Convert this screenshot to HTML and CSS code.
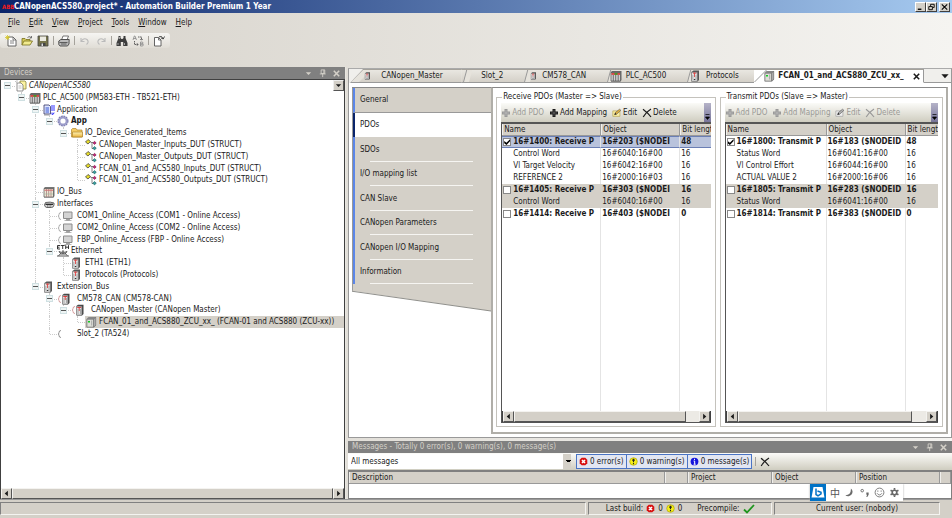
FILE: index.html
```html
<!DOCTYPE html>
<html lang="en">
<head>
<meta charset="utf-8">
<title>CANopenACS580.project* - Automation Builder Premium 1 Year</title>
<link rel="stylesheet" href="styles.css">
</head>
<body>
<svg class="defs" aria-hidden="true">
  <defs>
    <linearGradient id="gold" x1="0" y1="0" x2="0" y2="1"><stop offset="0" stop-color="#fff3b4"/><stop offset="1" stop-color="#e9b23c"/></linearGradient>
    <symbol id="project" viewBox="0 0 12 12"><path d="M5 1h5l1 1v7H5z" fill="#fbf3a2" stroke="#8a8640" stroke-width=".8"/><path d="M2 3h4l2 2v6H2z" fill="#fff" stroke="#777" stroke-width=".8"/><path d="M3.500 6h3M3.500 8h3" stroke="#999" stroke-width=".6"/><path d="M0 1l2 2M2 0v2" stroke="#aaa" stroke-width=".7"/></symbol>
    <symbol id="plc" viewBox="0 0 12 12"><path d="M1 2l1-1h9.500v9l-1 1.500H1z" fill="#666"/><path d="M1 2.500h9.500v8.500H1z" fill="#d2d2d2" stroke="#555" stroke-width=".7"/><path d="M1.500 3.200h8.500v1.500H1.500z" fill="#d22"/><path d="M4.500 3.200h3v1.500h-3z" fill="#2a2"/><path d="M3.300 5v6M5.700 5v6M8.200 5v6" stroke="#555" stroke-width=".8"/></symbol>
    <symbol id="iobus" viewBox="0 0 12 12"><path d="M1 2l1-1h9.500v9l-1 1.500H1z" fill="#777"/><path d="M1 2.500h9.500v8.500H1z" fill="#ece6d6" stroke="#555" stroke-width=".7"/><path d="M1.500 4.200h8.500" stroke="#d66" stroke-width="1"/><path d="M3.500 3v8M5.700 3v8M8 3v8" stroke="#b08080" stroke-width=".8"/><path d="M2 8h8" stroke="#9b9" stroke-width=".6"/></symbol>
    <symbol id="app" viewBox="0 0 12 12"><path d="M1 1h5l1.500 1.500V10H1z" fill="#dfe6ff" stroke="#336" stroke-width=".8"/><path d="M2.500 4h3.500M2.500 6h3.500M2.500 8h3.500" stroke="#24c" stroke-width=".9"/><path d="M9 1v6M11 1v6M9 8.500v2M11 8.500q0 2-2 2" stroke="#33f" stroke-width="1" fill="none"/><path d="M1 11h5" stroke="#888" stroke-width=".8"/></symbol>
    <symbol id="gear" viewBox="0 0 12 12"><circle cx="6" cy="6" r="4.800" fill="none" stroke="#7a7aae" stroke-width="1.400" stroke-dasharray="1.900 .6"/><circle cx="6" cy="6" r="3.600" fill="#fff" stroke="#9c9cca" stroke-width="2"/></symbol>
    <symbol id="folder" viewBox="0 0 12 12"><path d="M.5 10V2.500L1.500 1.500h3.500l1 1.500h5v7z" fill="#f5cc63" stroke="#b0842a" stroke-width=".7"/><path d="M1.500 10V5h10v5z" fill="url(#gold)" stroke="#b0842a" stroke-width=".7"/></symbol>
    <symbol id="dut" viewBox="0 0 12 12"><path d="M3 .5l2.500 2L3 5 .5 3z" fill="#e6dc2a" stroke="#444" stroke-width=".8"/><path d="M5.500 3.500h3M7 3.500v6h1.500" stroke="#555" stroke-width=".7" fill="none"/><path d="M9.500 2.300l1.700 1.600-1.700 1.600L8 3.900z" fill="#c0267e" stroke="#602" stroke-width=".5"/><path d="M9.500 7.500l1.800 1.700-1.800 1.700L7.800 9.200z" fill="#3aa0a0" stroke="#044" stroke-width=".5"/></symbol>
    <symbol id="iface" viewBox="0 0 12 12"><path d="M2.500 4.500q5-1 8.500.5v2q-.5 2.500-2.500 2.500H4Q2 9.500 1.500 7z" fill="#ddd" stroke="#555" stroke-width=".9"/><path d="M2.500 6.300h7.500" stroke="#222" stroke-width="1.300"/><path d="M4 8h5" stroke="#444" stroke-width=".9" stroke-dasharray="1 .6"/></symbol>
    <symbol id="com" viewBox="0 0 17 12"><path d="M4 2.500q-2 0-2 2Q2 6 1 6q1 0 1 1.500 0 2 2 2" fill="none" stroke="#999" stroke-width=".8"/><path d="M6.500 2h8.500v6.500H6.500z" fill="#d4d4d4" stroke="#8c8c8c" stroke-width="1"/><path d="M9.500 9h3v1.200h-3zM7.500 10.500h7" fill="#aaa" stroke="#999" stroke-width=".7"/></symbol>
    <symbol id="eth" viewBox="0 0 12 12"><path d="M0 11h12M1.500 10.500l2-1.500h5l2 1.500M4 9L2 6.500 4.500 7.500 6 5.500 7.500 7.500 10 6.500 8 9M5 9l1-2 1 2" fill="none" stroke="#444" stroke-width=".9"/><path d="M3 .5H.5V4H3M.5 2.200h2M3.700.5h4M5.700.5V4M8.700.2V4M11.500.2V4M8.700 2.200h2.800" fill="none" stroke="#222" stroke-width=".9"/></symbol>
    <symbol id="module" viewBox="0 0 12 12"><path d="M1.500 2l2-1.500h5.500V10l-1.500 1.500h-6z" fill="#555"/><path d="M1.500 2.300h5.800v8.900H1.500z" fill="#dedede" stroke="#777" stroke-width=".6"/><path d="M4.500 2.500v4.500M3 3.200h3.300" stroke="#d44" stroke-width=".9"/><path d="M2.800 5v4.500M6 5v4.500" stroke="#999" stroke-width=".7"/><path d="M3.800 9.500h1.500" stroke="#333" stroke-width="1"/></symbol>
    <symbol id="canmod" viewBox="0 0 17 12"><path d="M4 2.500q-2 0-2 2Q2 6 1 6q1 0 1 1.500 0 2 2 2" fill="none" stroke="#c88" stroke-width=".8"/><path d="M5.500 2L7 .8h5.500V10L11 11.500H5.500z" fill="#444"/><path d="M5.500 2.300h5.300V11H5.500z" fill="#e2e2e2" stroke="#777" stroke-width=".6"/><path d="M6.200 3.500h4M8.200 3.500V7" stroke="#d33" stroke-width=".9"/><path d="M7 5v5M9.500 5v5" stroke="#999" stroke-width=".8"/></symbol>
    <symbol id="slot" viewBox="0 0 17 12"><path d="M4 2.500q-2 0-2 2Q2 6 1 6q1 0 1 1.500 0 2 2 2" fill="none" stroke="#777" stroke-width=".8"/></symbol>
    <symbol id="drive" viewBox="0 0 12 12"><path d="M1.500 3l2-2H11v8.500L9 11.500H1.500z" fill="#888"/><path d="M2 3.300h6.500v7.700H2z" fill="#deded8" stroke="#777" stroke-width=".6"/><path d="M8.500 3.300L10.800 1.200v8L8.500 11z" fill="#aaa" stroke="#666" stroke-width=".4"/><path d="M3 5h2v1.500H3z" fill="#1c2"/><path d="M6.700 4.500v5" stroke="#999" stroke-width=".8"/></symbol>
    <symbol id="plus" viewBox="0 0 10 10"><path d="M3.500 1h3v2.500H9v3H6.500V9h-3V6.500H1v-3h2.500z" fill="currentColor"/><path d="M5 2v6M2 5h6" stroke="#fff" stroke-opacity=".3" stroke-width=".8"/></symbol>
    <symbol id="edit" viewBox="0 0 12 10"><path d="M1 2.500h8.500V9H1z" fill="#fbf1a6" stroke="#b5a04a" stroke-width=".8"/><path d="M3 7l1-2.500L9 .5l1.700 1.300L5.500 6.500z" fill="#e6b23a" stroke="#555" stroke-width=".7"/><path d="M3 7l2.500-.5L4 4.800z" fill="#222"/></symbol>
    <symbol id="cross" viewBox="0 0 10 10"><path d="M1 1.200Q6 5 9 9M9 1Q4 4 1.200 9" fill="none" stroke="currentColor" stroke-width="1.200"/></symbol>
    <symbol id="new" viewBox="0 0 12 12"><path d="M3 2h5l3 3v6H3z" fill="#fff" stroke="#555" stroke-width=".9"/><path d="M8 2v3h3M5 6h4M5 8h4" fill="none" stroke="#666" stroke-width=".8"/><path d="M2.500 0v5M0 2.500h5M.7.7l3.600 3.600M4.300.7L.7 4.300" stroke="#d6c62a" stroke-width=".8"/></symbol>
    <symbol id="open" viewBox="0 0 12 12"><path d="M1 10V3.500h3l1 1h4V6" fill="#d4c95a" stroke="#776f1c" stroke-width=".8"/><path d="M1 10l2-4h8.500l-2.500 4z" fill="#f1ea8e" stroke="#776f1c" stroke-width=".8"/><path d="M6.500 2.500Q8.500.5 10 2.500M10.500 1v2h-2" fill="none" stroke="#555" stroke-width=".8"/></symbol>
    <symbol id="save" viewBox="0 0 12 12"><path d="M1 1h10v10H1z" fill="#77754c" stroke="#444" stroke-width=".8"/><path d="M3 1.500h6V6H3z" fill="#ecebe2"/><path d="M3.500 8h5v3h-5z" fill="#444"/><path d="M4.500 8.500h1.500V11H4.500z" fill="#ddd"/></symbol>
    <symbol id="print" viewBox="0 0 12 12"><path d="M3.500 5L5 1h5.500L9 5z" fill="#fff" stroke="#555" stroke-width=".8"/><path d="M.8 6l2-1.500h8.400L11 9 9.500 11H2L.8 9.500z" fill="#bbb" stroke="#444" stroke-width=".9"/><path d="M1.500 7.500h8M3 9h5.500" stroke="#444" stroke-width=".8"/></symbol>
    <symbol id="undo" viewBox="0 0 12 12"><path d="M2 3v3.500h3.500M2.300 6Q5 2.500 8 4.500q2.500 2.500-.5 5" fill="none" stroke="#bbb" stroke-width="1.100"/></symbol>
    <symbol id="redo" viewBox="0 0 12 12"><path d="M10 3v3.500H6.500M9.700 6Q7 2.500 4 4.500q-2.500 2.500.5 5" fill="none" stroke="#bbb" stroke-width="1.100"/></symbol>
    <symbol id="find" viewBox="0 0 12 12"><path d="M2.500 1h2v2l1 1h1l1-1V1h2v2L11.500 8v3H7.200V7H4.800v4H.5V8l2-5z" fill="#3d3d3d"/><path d="M2 8v2M8.500 8v2M3.500 2v2" stroke="#bbb" stroke-width=".8"/></symbol>
    <symbol id="replace" viewBox="0 0 12 12"><path d="M1 5l1.300-4h.7L4.500 5M1.500 3.500H4M8.500 7h2q1 1 0 2h-2zM8.500 9h2.500q.7 1-.3 2H8.500z" fill="none" stroke="#888" stroke-width=".8"/><path d="M6 2h3.500v3M8.300 4l1.200 1.300L10.700 4M2.500 6v3.500h3.500M5 8.300l1.200 1.200L5 10.700" fill="none" stroke="#555" stroke-width=".9" stroke-dasharray="1.500 .5"/></symbol>
    <symbol id="export" viewBox="0 0 12 12"><path d="M1.500 2.500h4L8 5v6H1.500z" fill="#fff" stroke="#555" stroke-width=".9"/><path d="M5.500 2.500V5H8" fill="none" stroke="#555" stroke-width=".8"/><path d="M6 1.800Q9 .5 10 3.500M11.500 1.500L10.200 4 8 2.800" fill="none" stroke="#333" stroke-width=".9"/></symbol>
    <symbol id="pin" viewBox="0 0 10 10"><path d="M3.500 1h4v4h-4zM2 5.500h6.500M5.200 5.500V9M6.500 1v4" fill="none" stroke="currentColor" stroke-width="1"/></symbol>
    <symbol id="x" viewBox="0 0 10 10"><path d="M2 2l6 6M8 2L2 8" stroke="currentColor" stroke-width="1.700"/></symbol>
    <symbol id="down" viewBox="0 0 10 10"><path d="M2 3.500h6L5 6.800z" fill="currentColor"/></symbol>
    <symbol id="left" viewBox="0 0 10 10"><path d="M6.500 2v6L3 5z" fill="currentColor"/></symbol>
    <symbol id="right" viewBox="0 0 10 10"><path d="M3.500 2v6L7 5z" fill="currentColor"/></symbol>
    <symbol id="error" viewBox="0 0 10 10"><path d="M3 .8h4L9.200 3v4L7 9.200H3L.8 7V3z" fill="#d80f0f"/><path d="M3.300 3.300l3.400 3.400M6.700 3.300L3.300 6.700" stroke="#fff" stroke-width="1.700"/></symbol>
    <symbol id="warning" viewBox="0 0 10 10"><circle cx="5" cy="5" r="4.200" fill="#f5ee17" stroke="#a9a000" stroke-width=".7"/><path d="M5 2v3.500M5 6.500V8M3.500 3.500h3" stroke="#222" stroke-width="1.200"/></symbol>
    <symbol id="info" viewBox="0 0 10 10"><circle cx="5" cy="5" r="4.300" fill="#1414dc"/><path d="M5 2v1.300M4 4.500h1.200V8M4 8h2.300" fill="none" stroke="#fff" stroke-width="1.100"/></symbol>
    <symbol id="check" viewBox="0 0 12 10"><path d="M1 5.500L4 8.500 11 1" fill="none" stroke="#1d951d" stroke-width="1.800"/></symbol>
  </defs>
</svg>

<header class="titlebar">
  <span class="abb">ABB</span>
  <h1>CANopenACS580.project* - Automation Builder Premium 1 Year</h1>
  <div class="winbtns">
    <button aria-label="Minimize"><svg viewBox="0 0 10 8"><path d="M2 6.500h4" stroke="#000" stroke-width="1.500"/></svg></button><button aria-label="Restore"><svg viewBox="0 0 10 8"><path d="M4 3V1h4v3.500H6.500M2 3.500h4V7H2z" fill="none" stroke="#000" stroke-width="1"/></svg></button><button class="close" aria-label="Close"><svg viewBox="0 0 10 8"><path d="M2 1l6 6M8 1L2 7" stroke="#000" stroke-width="1.200"/></svg></button>
  </div>
</header>

<nav class="menu">
  <a href="#"><u>F</u>ile</a><a href="#"><u>E</u>dit</a><a href="#"><u>V</u>iew</a><a href="#"><u>P</u>roject</a><a href="#"><u>T</u>ools</a><a href="#"><u>W</u>indow</a><a href="#"><u>H</u>elp</a>
</nav>

<div class="toolstrip">
  <div class="tools">
    <button aria-label="New"><svg><use href="#new"/></svg></button>
    <button aria-label="Open"><svg><use href="#open"/></svg></button>
    <button aria-label="Save"><svg><use href="#save"/></svg></button>
    <span class="sep"></span>
    <button aria-label="Print"><svg><use href="#print"/></svg></button>
    <span class="sep"></span>
    <button aria-label="Undo" disabled><svg><use href="#undo"/></svg></button>
    <button aria-label="Redo" disabled><svg><use href="#redo"/></svg></button>
    <span class="sep"></span>
    <button aria-label="Find"><svg><use href="#find"/></svg></button>
    <button aria-label="Replace"><svg><use href="#replace"/></svg></button>
    <span class="sep"></span>
    <button aria-label="Export"><svg><use href="#export"/></svg></button>
  </div>
</div>

<main class="work">
  <section class="devices">
    <div class="panelhead"><h2>Devices</h2>
      <button aria-label="Menu"><svg><use href="#down"/></svg></button><button aria-label="Pin"><svg><use href="#pin"/></svg></button><button aria-label="Close"><svg><use href="#x"/></svg></button>
    </div>
    <div class="treebox">
      <ul class="tree" id="tree"></ul>
      <button class="treemenu" aria-label="Options"><svg><use href="#down"/></svg></button>
    </div>
    <div class="hscroll"><button aria-label="Scroll left"><svg><use href="#left"/></svg></button><span class="thumb full"></span><button aria-label="Scroll right"><svg><use href="#right"/></svg></button></div>
  </section>

  <div class="right">
    <section class="editor">
      <div class="tabs">
        <button class="tab first"><svg><use href="#module"/></svg><span>CANopen_Master</span></button>
        <button class="tab"><span>Slot_2</span></button>
        <button class="tab"><svg><use href="#module"/></svg><span>CM578_CAN</span></button>
        <button class="tab"><svg class="big"><use href="#plc"/></svg><span>PLC_AC500</span></button>
        <button class="tab t5"><svg class="big"><use href="#module"/></svg><span>Protocols</span></button>
        <button class="tab active"><svg class="big"><use href="#drive"/></svg><span>FCAN_01_and_ACS880_ZCU_xx_</span><svg class="x"><use href="#x"/></svg></button>
        <span class="tabrest"><button aria-label="Tab list"><svg><use href="#down"/></svg></button></span>
      </div>
      <div class="page">
        <div class="side">
          <nav class="sidenav">
            <a href="#" class="flat">General</a><a href="#" class="on">PDOs</a><a href="#">SDOs</a><a href="#">I/O mapping list</a><a href="#">CAN Slave</a><a href="#">CANopen Parameters</a><a href="#">CANopen I/O Mapping</a><a href="#">Information</a>
          </nav>
          <svg class="wedge" viewBox="0 0 140 29" preserveAspectRatio="none"><path d="M0 0h140v28L0 7z" fill="#d4d0c8"/><path d="M0 7.500L140 28" stroke="#8c8c88" stroke-width="1"/><path d="M.5 0v7" stroke="#999"/></svg>
        </div>
        <div class="pdos" id="pdos"></div>
      </div>
    </section>

    <section class="messages">
      <div class="panelhead"><h2>Messages - Totally 0 error(s), 0 warning(s), 0 message(s)</h2>
        <button aria-label="Menu"><svg><use href="#down"/></svg></button><button aria-label="Pin"><svg><use href="#pin"/></svg></button><button aria-label="Close"><svg><use href="#x"/></svg></button>
      </div>
      <div class="msgbar">
        <select aria-label="Message category"><option>All messages</option></select>
        <span class="grip"></span>
        <button class="flt"><svg><use href="#error"/></svg>0 error(s)</button><button class="flt"><svg><use href="#warning"/></svg>0 warning(s)</button><button class="flt"><svg><use href="#info"/></svg>0 message(s)</button>
        <span class="sep"></span>
        <button class="clear" aria-label="Clear"><svg><use href="#cross"/></svg></button>
      </div>
      <div class="msgtable">
        <table><colgroup><col class="w1"><col class="w2"><col class="w3"><col class="w3"><col class="w3"><col></colgroup>
          <thead><tr><th>Description</th><th></th><th>Project</th><th>Object</th><th>Position</th><th></th></tr></thead></table>
      </div>
    </section>
  </div>
</main>

<footer class="status">
  <span class="cell c1"></span>
  <span class="cell c2">Last build: <svg><use href="#error"/></svg>0 <svg><use href="#warning"/></svg>0 <span class="pre">Precompile:</span><svg class="ok"><use href="#check"/></svg></span>
  <span class="cell c3">Current user: (nobody)</span>
  <div class="ime">
    <span class="bing"><svg viewBox="0 0 16 17"><path d="M3.500 3h9l2 10.500h-13z" fill="#fff"/><path d="M6 4.500v6l2 1.300 3-2V8.300L7.500 7" fill="none" stroke="#0072c6" stroke-width="1.500"/></svg></span>
    <span class="zh" lang="zh">中</span>
    <svg viewBox="0 0 12 12"><path d="M7.500 1.500a4.800 4.800 0 1 1-6 7.500Q8 9 7.500 1.500z" fill="#6b6b6b"/></svg>
    <svg viewBox="0 0 12 12"><circle cx="3.500" cy="4" r="1.400" fill="none" stroke="#666"/><path d="M8 6h2.500v2.500L9 11H8l.8-2.500H8z" fill="#666"/></svg>
    <svg viewBox="0 0 12 12"><circle cx="6" cy="6" r="4.800" fill="none" stroke="#666" stroke-width=".9"/><path d="M4.200 3.800v1.400M7.800 3.800v1.400M3.300 6.800Q6 10.500 8.700 6.800" fill="none" stroke="#666" stroke-width=".9"/></svg>
    <svg viewBox="0 0 12 12"><circle cx="6" cy="6" r="2.500" fill="none" stroke="#666" stroke-width="1.800"/><path d="M6 1v2M6 9v2M1.700 3.500l1.700 1M8.600 7.500l1.700 1M1.700 8.500l1.700-1M8.600 4.500l1.700-1" stroke="#666" stroke-width="1.800"/></svg>
  </div>
</footer>
<script src="script.js"></script>
</body>
</html>
```
FILE: styles.css
```css
* { box-sizing: border-box; }
html, body { height: 100%; margin: 0; }
body {
  display: flex; flex-direction: column; overflow: hidden;
  font: 8px/12px "DejaVu Sans Condensed", "DejaVu Sans", sans-serif;
  color: #1a1a1a;
  background: linear-gradient(90deg, #d6d2ca, #f5f4f1);
}
h1, h2 { margin: 0; font: inherit; }
button, select { font: inherit; color: inherit; border: 0; padding: 0; margin: 0; background: none; }
a { color: inherit; text-decoration: none; }
svg { display: block; width: 12px; height: 12px; flex: none; }
.defs { position: absolute; width: 0; height: 0; }

.titlebar { display: flex; align-items: center; height: 13px; padding: 0 2px; background: linear-gradient(90deg, #0a246a, #a6caf0); color: #fff; }
.titlebar h1 { flex: 1; font-weight: bold; padding-left: 1px; }
.abb { width: 11px; font: bold 6px/8px "DejaVu Sans Condensed", sans-serif; color: #f01c1c; }
.winbtns { display: flex; }
.winbtns button { width: 11px; height: 10px; background: #d4d0c8; border: 1px solid; border-color: #fff #404040 #404040 #fff; }
.winbtns svg { width: 9px; height: 8px; }
.winbtns .close { margin-left: 2px; }

.menu { display: flex; gap: 9px; padding: 4px 8px 0; height: 20px; }
.toolstrip { height: 34px; }
.tools { display: inline-flex; align-items: center; gap: 4px; height: 15px; padding: 0 5px; border-radius: 3px; background: linear-gradient(#f6f5f2, #e0ddd6); }
.sep { width: 1px; height: 9px; background: #a5a29b; }

.work { flex: 1; min-height: 0; display: grid; grid-template-columns: minmax(0, 346fr) minmax(0, 604fr); gap: 2px; }
.panelhead { display: flex; align-items: center; height: 12px; padding: 0 4px; background: #808080; color: #d4d0c8; gap: 5px; }
.panelhead h2 { flex: 1; }
.panelhead svg { width: 9px; height: 9px; }
.devices { display: flex; flex-direction: column; min-height: 0; border-right: 1px solid #e8e6e0; }
.treebox { position: relative; flex: 1; min-height: 0; overflow: hidden; background: #fff; border: 1px solid #404040; border-bottom: 0; }
.treemenu { position: absolute; top: 0; right: 0; width: 11px; height: 11px; background: #d4d0c8; border: 1px solid; border-color: #eee #555 #555 #eee; }
.treemenu svg { width: 9px; height: 9px; }
.tree { list-style: none; margin: 0; padding: 0; height: 260px; display: grid; grid-auto-rows: 1fr; }
.tree li { display: flex; align-items: center; white-space: pre; min-height: 0; }
.node { display: flex; align-items: center; align-self: stretch; padding-right: 1px; }
.node.sel { flex: 1; background: #d4d0c8; }
.ico { width: 14px; }
.ico.wide { width: 20px; }
.ico.wide svg { width: 17px; }
.cell14 { position: relative; align-self: stretch; width: 14px; flex: none; display: flex; align-items: center; justify-content: center; }
.v::before, .tee::before, .end::before { content: ""; position: absolute; left: 6px; top: 0; bottom: 0; border-left: 1px dotted #ccc; }
.end::before { bottom: 50%; }
.tee::after, .end::after, .dash::after { content: ""; position: absolute; left: 7px; right: 0; top: 50%; border-top: 1px dotted #ccc; }
.exp { position: relative; z-index: 1; width: 5px; height: 5px; margin-right: 1px; outline: 1px solid #cfe0e2; background: #eef4f4; }
.exp::before { content: ""; position: absolute; left: 0; right: 0; top: 2px; height: 1px; background: #555; }
.i { font-style: italic; }
.b { font-weight: bold; }

.hscroll { display: flex; height: 11px; background: #eceae5; border: solid #404040; border-width: 0 1px; }
.hscroll button, .thumb { background: #d4d0c8; border: 1px solid; border-color: #f4f3f0 #555 #555 #f4f3f0; }
.hscroll button { width: 11px; }
.hscroll svg { width: 9px; height: 9px; }
.thumb { flex: 1; }
.thumb.part { flex: 0 0 83%; }
.hscroll .space { flex: 1; }

.right { display: flex; flex-direction: column; min-width: 0; min-height: 0; padding-top: 1px; }
.editor { flex: 1; min-height: 0; display: flex; flex-direction: column; background: #fff; border: 1px solid #999; border-top-color: #aaa; }
.tabs { display: grid; grid-template-columns: 112fr 61fr 83fr 81fr 68fr 170fr 27fr; height: 14px; padding-left: 1px; background: #f0efec; }
.tab { position: relative; display: flex; align-items: center; justify-content: center; min-width: 0; background: linear-gradient(#e9e7e1, #d4d0c8); border-top: 1px solid #a5a29b; border-bottom: 1px solid #999; white-space: nowrap; }
.tab svg { position: absolute; left: 7px; width: 8px; height: 8px; }
.tab svg.big { left: 4px; width: 12px; height: 12px; }
.tab::before { content: ""; position: absolute; left: 1px; top: 0; bottom: 0; width: 5px; border-left: 1px solid #999; background: #e6e3dc; transform: skewX(-15deg); transform-origin: bottom; }
.tab.first { padding-left: 12px; clip-path: polygon(13px 0, 100% 0, 100% 100%, 0 100%); }
.tab.first::before { left: 0; width: 8px; transform: skewX(-45deg); }
.tab.first svg { left: 14px; }
.tab.t5 { padding-left: 4px; }
.tab.active { justify-content: flex-start; padding-left: 24px; background: #fff; border-bottom-color: #fff; border-right: 1px solid #999; font-weight: bold; }
.tab.active::before { left: 0; width: 12px; background: #fff; transform: skewX(-45deg); }
.tab.active svg.big { left: 9px; }
.tab.active svg.x { left: auto; right: 2px; width: 9px; height: 9px; }
.tabrest { border-bottom: 1px solid #999; display: flex; align-items: center; justify-content: flex-end; }
.page { flex: 1; min-height: 0; display: grid; grid-template-columns: minmax(0, 139fr) minmax(0, 456fr); padding: 4px 3px 3px; }
.side { min-width: 0; border-top: 1px solid #888; }
.sidenav { display: grid; grid-auto-rows: 1fr; height: 196px; border-left: 1px solid #999; }
.sidenav a { position: relative; display: flex; align-items: center; padding: 1px 0 0 5px; background: #d4d0c8; border-left: 2px solid #5b86e8; }
.sidenav a::after { content: ""; position: absolute; left: 15px; right: 18px; bottom: 0; height: 1px; background: #f6f5f2; }
.sidenav a.flat::after, .sidenav a.on::after { display: none; }
.sidenav a.on { background: #fff; border-left-color: #0a246a; }
.sidenav a.flat { border-bottom: 1px solid #999; }
.wedge { width: 100%; height: 28px; }
.pdos { min-width: 0; display: grid; grid-template-columns: 219fr 223fr; gap: 4px; padding: 3px 3px 5px; border: 2px solid #b0aea8; border-top: 1px solid #888; }
.group { --n: 99px; position: relative; min-width: 0; margin: 0; padding: 0 4px 3px; border: 1px solid #c4c2bc; display: flex; flex-direction: column; }
.group + .group { --n: 101px; }
.group legend { padding: 0 1px; margin-left: 1px; height: 12px; }
.pbar { display: flex; align-items: center; height: 19px; background: linear-gradient(#fbfbf8, #cfcdc0); overflow: hidden; }
.pbar button { display: flex; align-items: center; white-space: nowrap; gap: 1px; margin-right: 5px; }
.pbar svg { width: 10px; height: 10px; }
.pbar button:disabled { color: #9a9a96; }
.pbar button:disabled svg { filter: grayscale(1); }
.pbar .more { margin: 0 0 0 auto; width: 7px; height: 19px; background: linear-gradient(#b5b3c8, #77759a); flex: none; }
.pbar .more svg { width: 7px; height: 18px; }
.pgrid { flex: 1; min-height: 0; display: flex; flex-direction: column; border: 1px solid #555; border-top-width: 2px; border-right: 0; overflow: hidden; }
.pscroll { flex: 1; overflow: hidden; background: linear-gradient(#e4e4e4, #e4e4e4) calc(var(--n) - 1px) 0/1px 100% no-repeat, linear-gradient(#e4e4e4, #e4e4e4) calc(var(--n) + 78px) 0/1px 100% no-repeat; }
table { border-collapse: separate; border-spacing: 0; table-layout: fixed; }
.pgrid table { width: 240px; }
.pgrid .n { width: var(--n); }
.pgrid .o { width: 79px; }
th { height: 12px; padding: 0 3px; font-weight: normal; text-align: left; background: #d4d0c8; border-right: 1px solid #999; border-bottom: 1px solid #999; box-shadow: inset 1px 0 #f0efec; white-space: nowrap; overflow: hidden; line-height: 11px; }
.pgrid th { padding: 0 2px; }
td { height: 12px; padding: 0 1px; line-height: 12px; white-space: nowrap; overflow: hidden; border-right: 1px solid #e4e4e4; }
td .pad { display: inline-block; width: 10px; vertical-align: top; }
td input { appearance: none; display: block; width: 8px; height: 8px; margin: 2px 0; border: 1px solid #888; background: #fff; }
td input:checked::before { content: ""; display: block; width: 6px; height: 6px; background: #000; clip-path: polygon(0 35%, 38% 62%, 100% 0, 100% 35%, 38% 100%, 0 70%); }
.alt td { background: #d4d0c8; border-right-color: #d4d0c8; }
.sel td { background: #b9c3dc; border-top: 1px solid #6b7fb5; border-bottom: 1px solid #6b7fb5; line-height: 10px; }
.sel td input { margin: 1px 0; }

.messages { margin-top: 3px; }
.msgbar { display: flex; align-items: center; height: 17px; background: linear-gradient(#fbfbf8, #cfcdc0); }
.msgbar select { width: 223px; height: 15px; padding: 0 3px; appearance: none; background: linear-gradient(#000, #000) 219px 7px/3px 1px no-repeat, linear-gradient(#000, #000) 218px 6px/5px 1px no-repeat, linear-gradient(90deg, #fff 215px, #d4d0c8 215px); }
.grip { width: 5px; }
.flt { display: flex; align-items: center; gap: 2px; height: 15px; padding: 0 2px; border: 1px solid #4a74c4; background: #e2e6f2; }
.flt + .flt { border-left-width: 0; }
.flt svg, .status svg { width: 9px; height: 9px; }
.msgbar .sep { margin: 0 4px 0 3px; }
.msgbar .clear svg { width: 10px; height: 10px; }
.msgtable { height: 29px; background: #fff; border: 1px solid #808080; border-top-width: 2px; }
.msgtable table { width: 100%; }
.w1 { width: 316px; }
.w2 { width: 23px; }
.w3 { width: 84px; }

.status { position: relative; flex: none; display: flex; gap: 2px; height: 19px; padding: 2px 12px 3px 0; background: #d4d0c8; border-top: 1px solid #999; }
.cell { display: flex; align-items: center; justify-content: center; border: 1px solid; border-color: #808080 #f4f3f0 #f4f3f0 #808080; }
.c1 { flex: 588 0 0; }
.c2 { flex: 183 0 0; gap: 3px; }
.c3 { flex: 165 0 0; }
.pre { margin-left: 12px; }
.status .ok { width: 12px; height: 10px; }
.ime { position: absolute; right: 49px; top: -16px; display: flex; align-items: center; gap: 4px; height: 17px; padding-right: 3px; background: #fff; box-shadow: 0 0 2px #aaa; }
.ime > svg { width: 11px; height: 11px; }
.ime .bing, .ime .bing svg { width: 16px; height: 17px; background: #0072c6; }
.ime .zh { font: 10px/12px "Noto Sans CJK SC", sans-serif; color: #555; }
```
FILE: script.js
```js
// [level, icon, text, class, expandable]
const nodes = [
  [0, "project", "CANopenACS580", "i", 1],
  [1, "plc", "PLC_AC500 (PM583-ETH - TB521-ETH)", "", 1],
  [2, "app", "Application", "", 1],
  [3, "gear", "App", "b", 1],
  [4, "folder", "IO_Device_Generated_Items", "", 1],
  [5, "dut", "CANopen_Master_Inputs_DUT (STRUCT)"],
  [5, "dut", "CANopen_Master_Outputs_DUT (STRUCT)"],
  [5, "dut", "FCAN_01_and_ACS580_Inputs_DUT (STRUCT)"],
  [5, "dut", "FCAN_01_and_ACS580_Outputs_DUT (STRUCT)"],
  [2, "iobus", "IO_Bus"],
  [2, "iface", "Interfaces", "", 1],
  [3, "com", "COM1_Online_Access (COM1 - Online Access)"],
  [3, "com", "COM2_Online_Access (COM2 - Online Access)"],
  [3, "com", "FBP_Online_Access (FBP - Online Access)"],
  [3, "eth", "Ethernet", "", 1],
  [4, "module", "ETH1 (ETH1)"],
  [4, "module", "Protocols (Protocols)"],
  [2, "module", "Extension_Bus", "", 1],
  [3, "canmod", "CM578_CAN (CM578-CAN)", "", 1],
  [4, "canmod", "CANopen_Master (CANopen Master)", "", 1],
  [5, "drive", "FCAN_01_and_ACS880_ZCU_xx_ (FCAN-01 and ACS880 (ZCU-xx))", "sel"],
  [3, "slot", "Slot_2 (TA524)"]
];
const wide = ["com", "canmod", "slot"];
const icon = id => `<svg><use href="#${id}"/></svg>`;

function hasNext(i, level) {
  for (let j = i + 1; j < nodes.length && nodes[j][0] >= level; j++) {
    if (nodes[j][0] === level) return true;
  }
  return false;
}

document.getElementById("tree").innerHTML = nodes.map(([level, ic, text, cls = "", exp], i) => {
  let cells = "";
  for (let k = 0; k < level; k++) cells += `<span class="cell14 ${hasNext(i, k) ? "v" : ""}"></span>`;
  const own = level === 0 ? "dash" : hasNext(i, level) ? "tee" : "end";
  cells += `<span class="cell14 ${own}">${exp ? '<button class="exp" aria-label="Collapse"></button>' : ""}</span>`;
  return `<li>${cells}<span class="node ${cls}"><span class="ico ${wide.includes(ic) ? "wide" : ""}">${icon(ic)}</span>${text}</span></li>`;
}).join("");

// [class, checkbox state or null, name, object, bit length]
const groups = [
  { title: "Receive PDOs (Master => Slave)", off: false, rows: [
    ["sel b", 1, "16#1400:  Receive P", "16#203 ($NODEI", 48],
    ["", null, "Control Word", "16#6040:16#00", 16],
    ["", null, "Vl Target Velocity", "16#6042:16#00", 16],
    ["", null, "REFERENCE 2", "16#2000:16#03", 16],
    ["alt b", 0, "16#1405:  Receive P", "16#303 ($NODEI", 16],
    ["alt", null, "Control Word", "16#6040:16#00", 16],
    ["b", 0, "16#1414:  Receive P", "16#403 ($NODEI", 0]] },
  { title: "Transmit PDOs (Slave => Master)", off: true, rows: [
    ["b", 1, "16#1800:  Transmit P", "16#183 ($NODEID", 48],
    ["", null, "Status Word", "16#6041:16#00", 16],
    ["", null, "Vl Control Effort", "16#6044:16#00", 16],
    ["", null, "ACTUAL VALUE 2", "16#2000:16#06", 16],
    ["alt b", 0, "16#1805:  Transmit P", "16#283 ($NODEID", 16],
    ["alt", null, "Status Word", "16#6041:16#00", 16],
    ["b", 0, "16#1814:  Transmit P", "16#383 ($NODEID", 0]] }
];

document.getElementById("pdos").innerHTML = groups.map(g => {
  const btn = (ic, label, off) => `<button ${off ? "disabled" : ""}>${icon(ic)}${label}</button>`;
  const rows = g.rows.map(([cls, chk, name, obj, bits]) =>
    `<tr class="${cls}"><td><span class="pad">${chk === null ? "&nbsp;" : `<input type="checkbox" aria-label="${name}" ${chk ? "checked" : ""}>`}</span>${name}</td><td>${obj}</td><td>${bits}</td></tr>`).join("");
  return `<fieldset class="group"><legend>${g.title.replace(">", "&gt;")}</legend>
    <div class="pbar">${btn("plus", "Add PDO", true)}${btn("plus", "Add Mapping", g.off)}${btn("edit", "Edit", g.off)}${btn("cross", "Delete", g.off)}
      <button class="more" aria-label="More"><svg viewBox="0 0 7 18"><path d="M1.500 10.500h4M1.500 13h4l-2 2.500z" fill="#000" stroke="#000" stroke-width=".7"/></svg></button></div>
    <div class="pgrid"><div class="pscroll"><table><colgroup><col class="n"><col class="o"><col></colgroup>
      <thead><tr><th>Name</th><th>Object</th><th>Bit length</th></tr></thead><tbody>${rows}</tbody></table></div>
      <div class="hscroll"><button aria-label="Scroll left">${icon("left")}</button><span class="thumb part"></span><span class="space"></span><button aria-label="Scroll right">${icon("right")}</button></div></div>
  </fieldset>`;
}).join("");
```
